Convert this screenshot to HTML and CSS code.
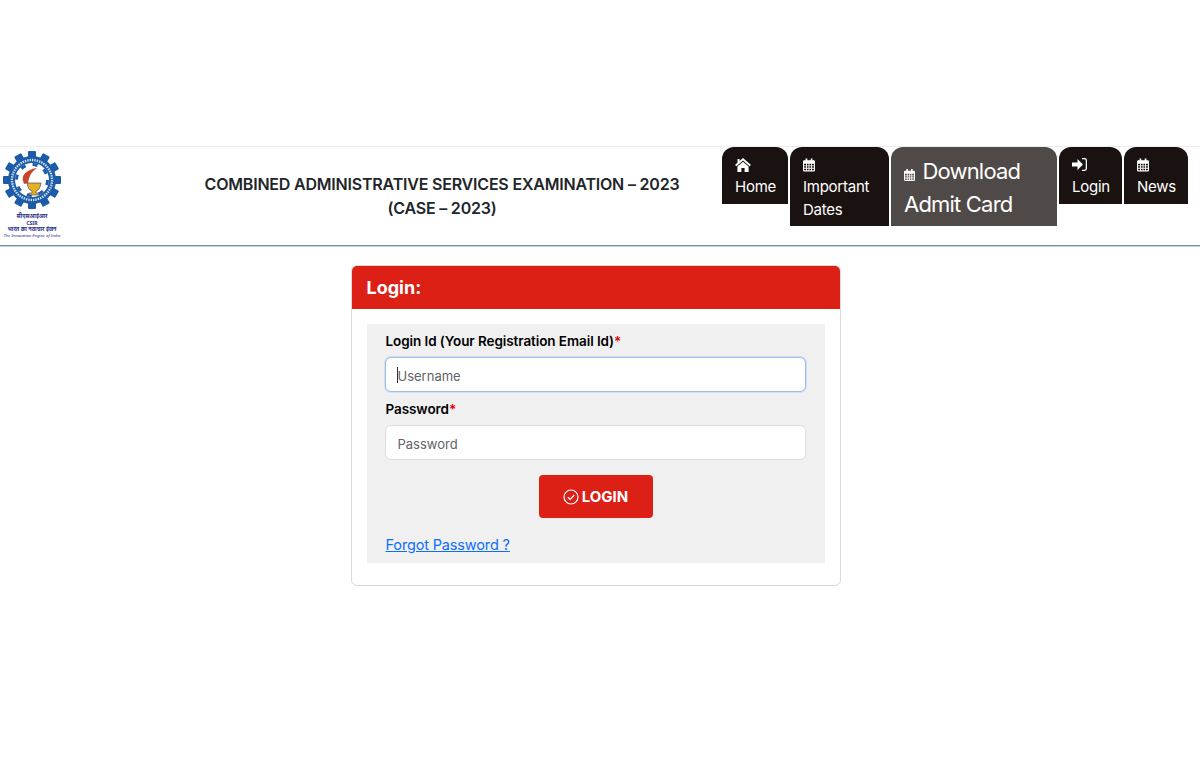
FILE: index.html
```html
<!DOCTYPE html>
<html lang="en">
<head>
    <meta charset="UTF-8">
    <meta name="viewport" content="width=device-width, initial-scale=1.0">
    <title>CASE 2023 Login</title>
    <link rel="stylesheet" href="styles.css">
</head>
<body>
    <svg class="icon-defs" width="0" height="0">
        <symbol id="i-home" viewBox="0 0 16 14">
            <path d="M8 0 L16 7 L14.6 8.2 L8 2.6 L1.4 8.2 L0 7 L2.5 4.8 V1 H4.6 V3 Z"/>
            <path d="M8 3.8 L13.6 8.5 V14 H9.6 V10 H6.4 V14 H2.4 V8.5 Z"/>
        </symbol>
        <symbol id="i-cal" viewBox="0 0 14 15">
            <path fill-rule="evenodd" d="M3 0 H5 V2 H9 V0 H11 V2 H12.5 Q14 2 14 3.5 V13.5 Q14 15 12.5 15 H1.5 Q0 15 0 13.5 V3.5 Q0 2 1.5 2 H3 Z M1.3 6 V8 H3.6 V6 Z M4.6 6 V8 H6.5 V6 Z M7.5 6 V8 H9.4 V6 Z M10.4 6 V8 H12.7 V6 Z M1.3 9 V10.8 H3.6 V9 Z M4.6 9 V10.8 H6.5 V9 Z M7.5 9 V10.8 H9.4 V9 Z M10.4 9 V10.8 H12.7 V9 Z M1.3 11.8 V13.7 H3.6 V11.8 Z M4.6 11.8 V13.7 H6.5 V11.8 Z M7.5 11.8 V13.7 H9.4 V11.8 Z M10.4 11.8 V13.7 H12.7 V11.8 Z"/>
        </symbol>
        <symbol id="i-signin" viewBox="0 0 15 13">
            <path d="M5.5 1 L11 6.5 L5.5 12 V8.6 H0 V4.4 H5.5 Z"/>
            <path d="M10 0 H12.6 Q15 0 15 2.4 V10.6 Q15 13 12.6 13 H10 V11.8 H12.4 Q13.7 11.8 13.7 10.4 V2.6 Q13.7 1.2 12.4 1.2 H10 Z"/>
        </symbol>
    </svg>

    <header class="site-header">
        <div class="logo-col">
            <svg class="logo" viewBox="0 0 64 88" width="64" height="88" role="img" aria-label="CSIR logo">
                <g class="gear-teeth">
                    <rect x="28" y="-2" width="8" height="8" rx="1"/>
                    <rect x="28" y="-2" width="8" height="8" rx="1" transform="rotate(30 32 27)"/>
                    <rect x="28" y="-2" width="8" height="8" rx="1" transform="rotate(60 32 27)"/>
                    <rect x="28" y="-2" width="8" height="8" rx="1" transform="rotate(90 32 27)"/>
                    <rect x="28" y="-2" width="8" height="8" rx="1" transform="rotate(120 32 27)"/>
                    <rect x="28" y="-2" width="8" height="8" rx="1" transform="rotate(150 32 27)"/>
                    <rect x="28" y="-2" width="8" height="8" rx="1" transform="rotate(180 32 27)"/>
                    <rect x="28" y="-2" width="8" height="8" rx="1" transform="rotate(210 32 27)"/>
                    <rect x="28" y="-2" width="8" height="8" rx="1" transform="rotate(240 32 27)"/>
                    <rect x="28" y="-2" width="8" height="8" rx="1" transform="rotate(270 32 27)"/>
                    <rect x="28" y="-2" width="8" height="8" rx="1" transform="rotate(300 32 27)"/>
                    <rect x="28" y="-2" width="8" height="8" rx="1" transform="rotate(330 32 27)"/>
                </g>
                <circle class="gear-ring" cx="32" cy="27" r="24"/>
                <circle class="ring-letters" cx="32" cy="27" r="20"/>
                <circle class="gear-hole" cx="32" cy="27" r="17"/>
                <circle class="spokes" cx="32" cy="27" r="15.5"/>
                <circle class="gear-hole" cx="32" cy="27" r="13.5"/>
                <path class="flame" d="M24 31 Q20 22 28 18 Q33 15 37 15 Q29 20 28 30 Z"/>
                <path class="lamp" d="M27 30 H41 Q40 37 36 38 V40 H39 V42 H29 V40 H32 V38 Q28 37 27 30 Z"/>
                <text class="logo-text logo-hi" x="32" y="65">सीएसआईआर</text>
                <text class="logo-text logo-csir" x="32" y="71.5">CSIR</text>
                <text class="logo-text logo-hi" x="32" y="78">भारत का नवाचार इंजन</text>
                <text class="logo-text logo-en" x="32" y="84">The Innovation Engine of India</text>
            </svg>
        </div>
        <h1 class="exam-title">COMBINED ADMINISTRATIVE SERVICES EXAMINATION – 2023<br>(CASE – 2023)</h1>
        <nav class="tabs">
            <a class="tab tab-home" href="#"><svg class="tab-icon icon-home"><use href="#i-home"/></svg><span>Home</span></a>
            <a class="tab tab-dates" href="#"><svg class="tab-icon icon-cal"><use href="#i-cal"/></svg><span>Important<br>Dates</span></a>
            <a class="tab tab-big" href="#"><svg class="tab-icon icon-cal-inline"><use href="#i-cal"/></svg> Download<br>Admit Card</a>
            <a class="tab tab-login" href="#"><svg class="tab-icon icon-signin"><use href="#i-signin"/></svg><span>Login</span></a>
            <a class="tab tab-news" href="#"><svg class="tab-icon icon-cal"><use href="#i-cal"/></svg><span>News</span></a>
        </nav>
    </header>

    <main class="main">
        <div class="card">
            <div class="card-head">Login:</div>
            <div class="card-body">
                <form class="login-form">
                    <label class="field-label" for="username">Login Id (Your Registration Email Id)<span class="req">*</span></label>
                    <div class="fake-focus">
                        <input class="field field-focus" id="username" type="text" placeholder="Username">
                        <span class="caret"></span>
                    </div>
                    <label class="field-label" for="password">Password<span class="req">*</span></label>
                    <input class="field" id="password" type="password" placeholder="Password">
                    <div class="btn-row">
                        <button class="btn-login" type="button">
                            <svg class="check" viewBox="0 0 16 16" width="16" height="16"><circle cx="8" cy="8" r="7" fill="none" stroke="#fff" stroke-width="1.2"/><path d="M4.8 8.2 L7.1 10.4 L11.3 6" fill="none" stroke="#fff" stroke-width="1.3"/></svg>
                            LOGIN
                        </button>
                    </div>
                    <a class="forgot" href="#">Forgot Password ?</a>
                </form>
            </div>
        </div>
    </main>
</body>
</html>
```

FILE: styles.css
```css
body {
    margin: 0;
    padding: 146px 0 0;
    background: #fff;
    color: #212529;
    font-family: Inter, "Noto Sans", sans-serif;
}

.icon-defs {
    position: absolute;
}

.site-header {
    display: flex;
    height: 98px;
    border-top: 1px solid #ececec;
    border-bottom: 1px solid #6f8ca3;
    box-shadow: 0 1px 0 #c9d6e0;
}

.logo-col {
    width: 162px;
    flex: none;
    padding-top: 6px;
}

.logo {
    display: block;
    overflow: visible;
}

.gear-ring, .gear-teeth {
    fill: #1c5ba8;
}

.ring-letters {
    fill: none;
    stroke: #cfe0f2;
    stroke-width: 2.4;
    stroke-dasharray: 1.4 1;
}

.gear-hole {
    fill: #fff;
}

.spokes {
    fill: none;
    stroke: #1c5ba8;
    stroke-width: 3;
    stroke-dasharray: 5 7.2;
}

.flame {
    fill: #c8452a;
}

.lamp {
    fill: #e8b21c;
    stroke: #27348b;
    stroke-width: 0.6;
}

.logo-text {
    text-anchor: middle;
    fill: #2b2f86;
    font-family: "Noto Sans", sans-serif;
}

.logo-hi {
    font-size: 5.5px;
    font-weight: 700;
}

.logo-csir {
    font-size: 5px;
    font-weight: 700;
}

.logo-en {
    font-size: 4.2px;
    font-style: italic;
}

.exam-title {
    width: 560px;
    flex: none;
    margin: 25px 0 0;
    text-align: center;
    font-size: 16px;
    line-height: 24px;
    font-weight: 600;
    letter-spacing: -0.2px;
}

.tabs {
    display: flex;
    align-items: flex-start;
    gap: 2px;
}

.tab {
    display: block;
    box-sizing: border-box;
    height: 57px;
    padding: 9px 13px 0;
    background: #1a1210;
    border-radius: 12px 12px 0 0;
    color: #fff;
    text-decoration: none;
    font-size: 15px;
    letter-spacing: -0.25px;
    line-height: 22.5px;
    white-space: nowrap;
}

.tab span {
    display: block;
}

.tab-icon {
    display: block;
    fill: #fff;
}

.icon-home {
    width: 16px;
    height: 14px;
    margin: 2px 0 4px;
}

.icon-cal {
    width: 12px;
    height: 14px;
    margin: 2px 0 4px;
}

.icon-signin {
    width: 15px;
    height: 13px;
    margin: 2px 0 5px;
}

.tab-home {
    width: 66px;
}

.tab-dates {
    width: 99px;
    height: 79px;
}

.tab-big {
    width: 166px;
    height: 79px;
    padding: 8px 13px 0;
    background: #4f4a48;
    font-size: 22px;
    letter-spacing: -0.8px;
    line-height: 33px;
}

.icon-cal-inline {
    display: inline-block;
    width: 11px;
    height: 12px;
    margin-right: 2px;
    vertical-align: -2px;
}

.tab-login {
    width: 63px;
}

.tab-news {
    width: 64px;
}

.main {
    padding-right: 9px;
}

.card {
    box-sizing: border-box;
    width: 490px;
    margin: 19px auto 0;
    padding: 0 0 22px;
    border: 1px solid #d9d9d9;
    border-radius: 6px;
}

.card-head {
    height: 43px;
    padding: 0 15px;
    background: #dd2016;
    border-radius: 5px 5px 0 0;
    color: #fff;
    font-size: 18px;
    font-weight: 700;
    line-height: 44px;
}

.card-body {
    padding: 15px 15px 0;
}

.login-form {
    padding: 7px 19px 8px 18px;
    background: #f0f0f0;
}

.field-label {
    display: block;
    padding-left: 1px;
    margin-bottom: 6px;
    color: #000;
    font-size: 13.5px;
    font-weight: 600;
    line-height: 20px;
    letter-spacing: -0.08px;
}

.req {
    color: #e00000;
}

.fake-focus {
    position: relative;
    margin-bottom: 7px;
}

.field {
    display: block;
    box-sizing: border-box;
    width: 100%;
    height: 35px;
    padding: 2px 12px 0;
    background: #fff;
    border: 1px solid #dcdfe3;
    border-radius: 6px;
    color: #555;
    font-family: inherit;
    font-size: 13px;
    outline: none;
}

.field::placeholder {
    color: #5f6368;
    opacity: 1;
}

.field-focus {
    border-color: #9dbdea;
    box-shadow: 0 0 0 1px #cfe0f7;
}

.caret {
    position: absolute;
    left: 12px;
    top: 10px;
    width: 1px;
    height: 16px;
    background: #333;
}

.btn-row {
    display: flex;
    justify-content: center;
    padding-left: 1px;
    margin-top: 15px;
}

.btn-login {
    display: flex;
    align-items: center;
    justify-content: center;
    gap: 3px;
    width: 114px;
    height: 43px;
    background: #dd2016;
    border: 0;
    border-radius: 4px;
    color: #fff;
    font-family: inherit;
    font-size: 15px;
    font-weight: 700;
}

.forgot {
    display: block;
    width: max-content;
    margin: 17px 0 0 1px;
    color: #0d6efd;
    font-size: 14.5px;
    line-height: 20px;
    letter-spacing: -0.15px;
}
```
